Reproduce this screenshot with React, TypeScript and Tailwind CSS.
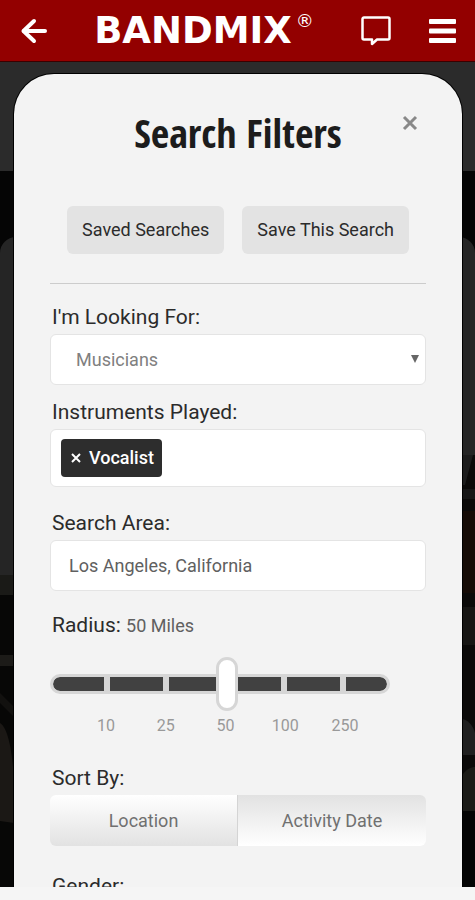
import { useState } from 'react';
import type { ReactNode } from 'react';
import clsx from 'clsx';

const RADIUS_STEPS = [10, 25, 50, 100, 250];
const SORT_OPTIONS = ['Location', 'Activity Date'];

const FIELD = 'w-full rounded-md border border-[#e4e4e4] bg-white';
const LABEL = 'block pb-px pl-0.5 text-[21px] leading-8';

function Header() {
  return (
    <header className="relative z-10 flex h-[62px] shrink-0 items-center border-b border-[#3a0000] bg-[#930000] pl-5 pr-[19px] text-white">
      <button type="button" aria-label="Back" className="w-[27px]">
        <svg viewBox="0 0 27 26" className="h-[26px] w-[27px]" fill="none" stroke="currentColor" strokeWidth="4">
          <path d="M25 13H4" strokeLinecap="round" />
          <path d="M14 3 3.500 13 14 23" strokeLinecap="round" strokeLinejoin="round" />
        </svg>
      </button>
      <a href="#" className="flex flex-1 items-center justify-center font-['DejaVu_Sans'] font-bold">
        <span className="text-[37px] leading-none">BANDMIX</span>
        <span className="mb-5 ml-1 text-lg font-normal leading-none">®</span>
      </a>
      <div className="flex items-center gap-[38px]">
        <button type="button" aria-label="Messages">
          <svg viewBox="0 0 30 30" className="size-[30px]" fill="none" stroke="currentColor" strokeWidth="2.500">
            <path
              d="M3 1.500h24a1.500 1.500 0 0 1 1.500 1.500v19a1.500 1.500 0 0 1-1.500 1.500H16l-5 4.500v-4.500H3a1.500 1.500 0 0 1-1.500-1.500V3A1.500 1.500 0 0 1 3 1.500z"
              strokeLinejoin="round"
            />
          </svg>
        </button>
        <button type="button" aria-label="Menu">
          <svg viewBox="0 0 27 24" className="h-6 w-[27px]" fill="currentColor">
            <rect width="27" height="5" rx="1" />
            <rect y="9.500" width="27" height="5" rx="1" />
            <rect y="19" width="27" height="5" rx="1" />
          </svg>
        </button>
      </div>
    </header>
  );
}

function Field({ label, htmlFor, className, children }: { label: string; htmlFor: string; className?: string; children: ReactNode }) {
  return (
    <div className={className}>
      <label htmlFor={htmlFor} className={LABEL}>
        {label}
      </label>
      {children}
    </div>
  );
}

function RadiusSlider({ value, onChange }: { value: number; onChange: (value: number) => void }) {
  return (
    <div className="mr-9 pt-4">
      <div className="relative py-4">
        <div className="flex h-5 gap-1.5 overflow-hidden rounded-full border-3 border-[#d6d6d6] bg-[#d6d6d6]">
          <div className="grow-[51] rounded-l-full bg-[#414141]" />
          <div className="grow-[53] bg-[#414141]" />
          <div className="grow-[53] bg-[#414141]" />
          <div className="grow-[53] bg-[#414141]" />
          <div className="grow-[53] bg-[#414141]" />
          <div className="grow-[41] rounded-r-full bg-[#414141]" />
        </div>
        <input
          id="radius"
          type="range"
          min={1}
          max={RADIUS_STEPS.length}
          value={value}
          onChange={(e) => onChange(Number(e.target.value))}
          className="absolute inset-y-0 left-[46px] h-full w-[calc(100%-79px)] appearance-none bg-transparent [&::-webkit-slider-thumb]:h-[54px] [&::-webkit-slider-thumb]:w-[22px] [&::-webkit-slider-thumb]:appearance-none [&::-webkit-slider-thumb]:rounded-full [&::-webkit-slider-thumb]:border-3 [&::-webkit-slider-thumb]:border-[#d6d6d6] [&::-webkit-slider-thumb]:bg-white"
        />
      </div>
      <div className="ml-[26px] mr-[15px] mt-1 grid grid-cols-5 text-center text-base leading-6 text-[#999]">
        {RADIUS_STEPS.map((step) => (
          <span key={step}>{step}</span>
        ))}
      </div>
    </div>
  );
}

// darkened page that stays visible around the dialog
function Backdrop() {
  return (
    <div className="absolute inset-0 bg-[#050505]" aria-hidden="true">
      <div className="h-[109px] bg-[#2b2b2b]" />
      <div className="mt-[66px] h-[340px] rounded-t-2xl bg-[#252525]" />
      <svg viewBox="0 0 14 312" className="absolute left-0 top-[513px] h-[312px] w-3.5">
        <rect width="14" height="20" fill="#1a1a17" />
        <rect y="20" width="14" height="292" fill="#070706" />
        <rect y="80" width="14" height="11" fill="#1c1b18" />
        <path d="M0 118l14 14v10L0 128z" fill="#12110f" />
        <path d="M0 148c7 4 12 24 14 56v44L0 246z" fill="#1b1815" />
      </svg>
      <svg viewBox="0 0 14 432" className="absolute right-0 top-[393px] h-[432px] w-3.5">
        <rect width="14" height="432" fill="#0b0a09" />
        <path d="M0 0h12L4 30H0z" fill="#1c1c1c" />
        <rect y="34" width="14" height="10" fill="#161616" />
        <rect y="56" width="14" height="82" fill="#150b06" />
        <rect y="152" width="14" height="38" fill="#171614" />
        <path d="M0 264c6 0 12 6 14 14v22H0z" fill="#202020" />
        <path d="M0 322c5-8 10-10 14-10v44H0z" fill="#1b1b17" />
        <rect y="356" width="14" height="76" fill="#040404" />
      </svg>
    </div>
  );
}

export default function App() {
  const [radius, setRadius] = useState(3);
  const [sort, setSort] = useState('Activity Date');

  return (
    <div className="flex h-screen flex-col overflow-hidden bg-[#f5f5f5] font-['Roboto',sans-serif] text-[#2b2b2b]">
      <Header />
      <main className="relative min-h-0 flex-1 overflow-hidden">
        <Backdrop />
        <section
          role="dialog"
          aria-labelledby="filters-title"
          className="relative ml-3.5 mr-[13px] mt-3 rounded-t-[40px] bg-[#f3f3f3] px-9 pb-10 ring-1 ring-black"
        >
          <div className="relative pt-8 text-center">
            <h1
              id="filters-title"
              className="font-['Open_Sans_Condensed','Noto_Sans_Condensed','Roboto_Condensed','Liberation_Sans_Narrow'] text-[40px] font-bold leading-[54px] text-[#1c1c1c]"
            >
              Search Filters
            </h1>
            <button type="button" aria-label="Close" className="absolute right-2 top-[41px] text-[#888]">
              <svg viewBox="0 0 16 16" className="size-4" fill="none" stroke="currentColor" strokeWidth="3">
                <path d="M2 2l12 12M14 2 2 14" />
              </svg>
            </button>
          </div>

          <div className="mt-[46px] flex justify-center gap-[18px] border-b border-[#ccc] pb-[29px]">
            <button type="button" className="h-12 rounded-md bg-[#e3e3e3] px-[15px] text-lg">
              Saved Searches
            </button>
            <button type="button" className="h-12 rounded-md bg-[#e3e3e3] px-[15px] text-lg">
              Save This Search
            </button>
          </div>

          <Field label="I'm Looking For:" htmlFor="looking-for" className="mt-[17px]">
            <div className="relative">
              <select id="looking-for" className={clsx(FIELD, 'h-[51px] appearance-none pl-[25px] text-lg text-[#808080]')}>
                <option>Musicians</option>
              </select>
              <svg viewBox="0 0 8 8" className="pointer-events-none absolute right-[7px] top-[21px] size-2 fill-[#666]">
                <path d="M0 0h8L4 8z" />
              </svg>
            </div>
          </Field>

          <Field label="Instruments Played:" htmlFor="instruments" className="mt-[11px]">
            <div className={clsx(FIELD, 'flex h-[58px] items-center px-2.5')}>
              <button
                type="button"
                className="flex h-[38px] items-center gap-2 rounded bg-[#2d2d2d] px-2 pl-2.5 text-lg font-medium text-white"
              >
                <svg viewBox="0 0 10 10" className="size-2.5" fill="none" stroke="currentColor" strokeWidth="2">
                  <path d="M1 1l8 8M9 1 1 9" />
                </svg>
                Vocalist
              </button>
              <input id="instruments" type="text" className="h-full min-w-0 flex-1 pl-2 text-lg outline-none" />
            </div>
          </Field>

          <Field label="Search Area:" htmlFor="search-area" className="mt-5">
            <input
              id="search-area"
              type="text"
              defaultValue="Los Angeles, California"
              className={clsx(FIELD, 'h-[51px] px-[18px] text-lg text-[#606060]')}
            />
          </Field>

          <label htmlFor="radius" className={clsx(LABEL, 'mt-[18px]')}>
            Radius: <span className="text-lg text-[#606060]">{RADIUS_STEPS[radius - 1]} Miles</span>
          </label>
          <RadiusSlider value={radius} onChange={setRadius} />

          <fieldset className="mt-6">
            <legend className={LABEL}>Sort By:</legend>
            <div className="grid h-[51px] grid-cols-2 overflow-hidden rounded-md">
              {SORT_OPTIONS.map((option) => (
                <button
                  key={option}
                  type="button"
                  aria-pressed={sort === option}
                  onClick={() => setSort(option)}
                  className={clsx(
                    'border-r border-[#d4d4d4] text-lg text-[#707070] last:border-r-0',
                    sort === option
                      ? 'bg-linear-to-b from-[#e2e2e2] to-white'
                      : 'bg-linear-to-b from-white to-[#e2e2e2]',
                  )}
                >
                  {option}
                </button>
              ))}
            </div>
          </fieldset>

          <Field label="Gender:" htmlFor="gender" className="mt-6">
            <select id="gender" className={clsx(FIELD, 'h-[51px] appearance-none pl-[25px] text-lg text-[#808080]')} />
          </Field>
        </section>
      </main>
      <div className="h-[13px] shrink-0" />
    </div>
  );
}
